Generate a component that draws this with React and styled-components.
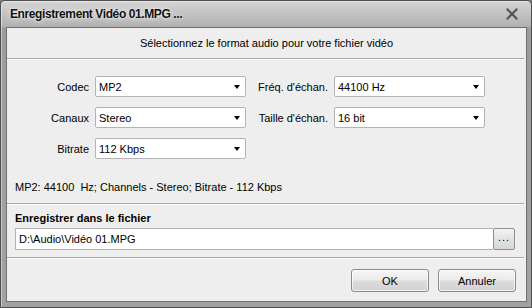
import React, { useState } from 'react';
import styled, { createGlobalStyle } from 'styled-components';

const GlobalStyle = createGlobalStyle`
  html, body {
    margin: 0;
    padding: 0;
    background: #7a7a7a;
  }
  body {
    font-family: Tahoma, "Liberation Sans", Arial, sans-serif;
    font-size: 11px;
    color: #000;
  }
`;

// Window chrome
const Window = styled.div`
  width: 532px;
  height: 308px;
  box-sizing: border-box;
  border: 1px solid #4e4e4e;
  border-radius: 5px 5px 0 0;
  background: linear-gradient(#d4d4d4 0px, #b0b0b0 26px, #9c9c9c 27px, #a2a2a2 100%);
  display: flex;
  flex-direction: column;
  padding: 0 4px 5px 5px;
  box-shadow: inset 1px 1px 0 rgba(255, 255, 255, 0.45);
`;

const TitleBar = styled.div`
  height: 26px;
  display: flex;
  align-items: center;
  justify-content: space-between;
  padding: 0 4px 0 4px;
`;

const Title = styled.div`
  font-family: Tahoma, "Liberation Sans", Arial, sans-serif;
  font-weight: bold;
  font-size: 12px;
  letter-spacing: -0.4px;
  color: #111;
  text-shadow: 0 0 6px rgba(255, 255, 255, 0.9), 0 0 2px rgba(255, 255, 255, 0.8);
`;

const CloseButton = styled.button`
  border: none;
  background: none;
  padding: 0;
  margin-right: 4px;
  width: 14px;
  height: 14px;
  display: flex;
  align-items: center;
  justify-content: center;
  cursor: pointer;
`;

const Panel = styled.div`
  flex: 1;
  background: #eeeeee;
  border: 1px solid #6f6f6f;
  display: flex;
  flex-direction: column;
`;

const Header = styled.div`
  text-align: center;
  padding: 8px 0 8px;
  line-height: 14px;
`;

const Separator = styled.div`
  height: 1px;
  background: #a9a9a9;
  border-bottom: 1px solid #fafafa;
  margin-right: 2px;
`;

const FormGrid = styled.div`
  display: grid;
  grid-template-columns: 88px 151px 88px 151px;
  row-gap: 10px;
  padding: 16px 0 0 0;
  align-items: center;
`;

const Label = styled.label`
  text-align: right;
  padding-right: 6px;
  white-space: nowrap;
`;

const SelectBox = styled.div`
  position: relative;
  height: 21px;
  box-sizing: border-box;
  background: #fff;
  border: 1px solid #b3b3b3;
  border-radius: 2px;
  display: flex;
  align-items: center;
  padding-left: 3px;
  cursor: default;
`;

const Arrow = styled.span`
  position: absolute;
  right: 5px;
  top: 8px;
  width: 0;
  height: 0;
  border-left: 3.5px solid transparent;
  border-right: 3.5px solid transparent;
  border-top: 4px solid #000;
`;

const Info = styled.div`
  padding: 21px 8px 9px;
  white-space: pre;
  line-height: 14px;
`;

const FileSection = styled.div`
  padding: 6px 11px 7px 8px;
`;

const SectionTitle = styled.div`
  font-weight: bold;
  line-height: 14px;
  margin-bottom: 3px;
`;

const FileRow = styled.div`
  display: flex;
  height: 22px;
`;

const FileInput = styled.input`
  flex: 1;
  min-width: 0;
  box-sizing: border-box;
  height: 22px;
  border: 1px solid #b3b3b3;
  border-right: none;
  background: #fff;
  font: inherit;
  padding: 0 3px;
  outline: none;
`;

const BrowseButton = styled.button`
  width: 22px;
  height: 22px;
  box-sizing: border-box;
  border: 1px solid #8f8f8f;
  border-radius: 2px;
  background: linear-gradient(#f4f4f4, #e2e2e2 50%, #d6d6d6);
  font: inherit;
  padding: 0 0 4px;
  letter-spacing: 1px;
`;

const Footer = styled.div`
  flex: 1;
  display: flex;
  justify-content: flex-end;
  align-items: flex-start;
  gap: 9px;
  padding: 10px 10px 0 0;
`;

const DialogButton = styled.button`
  width: 78px;
  height: 23px;
  box-sizing: border-box;
  border: 1px solid #8a8a8a;
  border-radius: 3px;
  background: linear-gradient(#f5f5f5, #ebebeb 48%, #dcdcdc 52%, #d2d2d2);
  box-shadow: inset 0 0 0 1px rgba(255, 255, 255, 0.7);
  font: inherit;
  color: #000;
  cursor: pointer;
`;

const Select = ({ value }) => (
  <SelectBox>
    {value}
    <Arrow />
  </SelectBox>
);

const App = () => {
  const [path, setPath] = useState('D:\\Audio\\Vidéo 01.MPG');

  return (
    <>
      <GlobalStyle />
      <Window>
        <TitleBar>
          <Title>Enregistrement Vidéo 01.MPG ...</Title>
          <CloseButton aria-label="Fermer">
            <svg width="12" height="12" viewBox="0 0 12 12">
              <path d="M1.5 1.5 L10.5 10.5 M10.5 1.5 L1.5 10.5" stroke="#555" strokeWidth="2.2" strokeLinecap="square" />
            </svg>
          </CloseButton>
        </TitleBar>
        <Panel>
          <Header>Sélectionnez le format audio pour votre fichier vidéo</Header>
          <Separator />
          <FormGrid>
            <Label>Codec</Label>
            <Select value="MP2" />
            <Label>Fréq. d'échan.</Label>
            <Select value="44100 Hz" />
            <Label>Canaux</Label>
            <Select value="Stereo" />
            <Label>Taille d'échan.</Label>
            <Select value="16 bit" />
            <Label>Bitrate</Label>
            <Select value="112 Kbps" />
          </FormGrid>
          <Info>MP2: 44100  Hz; Channels - Stereo; Bitrate - 112 Kbps</Info>
          <Separator />
          <FileSection>
            <SectionTitle>Enregistrer dans le fichier</SectionTitle>
            <FileRow>
              <FileInput value={path} onChange={(e) => setPath(e.target.value)} />
              <BrowseButton>...</BrowseButton>
            </FileRow>
          </FileSection>
          <Separator />
          <Footer>
            <DialogButton>OK</DialogButton>
            <DialogButton>Annuler</DialogButton>
          </Footer>
        </Panel>
      </Window>
    </>
  );
};

export default App;
